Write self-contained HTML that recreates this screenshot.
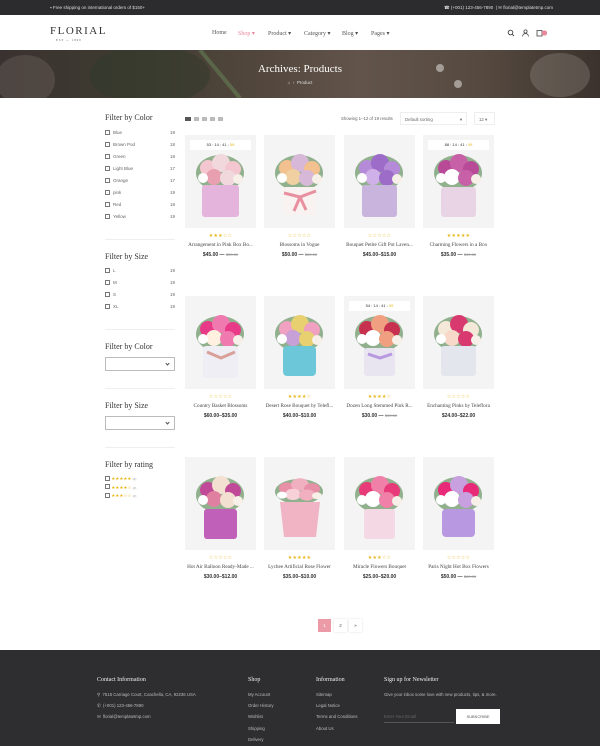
<!DOCTYPE html>
<html><head><meta charset="utf-8"><style>
*{margin:0;padding:0;box-sizing:border-box}
body{width:600px;height:746px;position:relative;background:#fff;font-family:"Liberation Sans",sans-serif;overflow:hidden;color:#333}
.a{position:absolute}
.serif{font-family:"Liberation Serif",serif}
.top{left:0;top:0;width:600px;height:15px;background:#2c2c2e;color:#ddd;font-size:4.5px}
.hdr{left:0;top:15px;width:600px;height:35px;background:#fff}
.nav span{position:absolute;top:30px;font-size:6px;color:#555;font-family:"Liberation Serif",serif}
.ban{left:0;top:50px;width:600px;height:48px;background:linear-gradient(90deg,#3a3230 0%,#3e3a30 20%,#54483e 45%,#62544a 60%,#564a40 80%,#3b322d 100%)}
.ft{font-family:"Liberation Serif",serif;font-size:8px;color:#333}
.li{font-size:4.5px;color:#666}
.cb{position:absolute;width:5px;height:5px;border:0.7px solid #777;background:#fff}
.hr{height:1px;background:#eee;width:70px;left:105px}
.sel{left:105px;width:70px;height:14px;border:1px solid #bbb}
.sel:after{content:"";position:absolute;right:5px;top:4px;width:2px;height:2px;border-right:1px solid #555;border-bottom:1px solid #555;transform:rotate(45deg)}
.card{position:absolute;width:71px}
.img{width:71px;height:93px;background:#f4f4f4;position:relative}
.st{text-align:center;font-size:5px;color:#e8b81e;margin-top:5px;letter-spacing:0.2px}
.nm{text-align:center;font-family:"Liberation Serif",serif;font-size:5.2px;color:#444;margin-top:3px;white-space:nowrap}
.pr{text-align:center;font-size:5px;color:#333;margin-top:4px;font-weight:bold}
.pr s{color:#999;font-weight:normal;font-size:4px}
.cd{position:absolute;left:5px;top:5px;width:61px;height:10px;background:#fff;font-size:4px;text-align:center;line-height:10px;color:#333}
.foot{left:0;top:650px;width:600px;height:96px;background:#2e2e30;color:#bbb}
.fh{font-family:"Liberation Serif",serif;font-size:6px;color:#eee;position:absolute}
.fl{font-size:4.3px;color:#bbb;position:absolute}
</style></head><body>
<div class="a top"><span class="a" style="left:50px;top:5px">▪ Free shipping on international orders of $150+</span><span class="a" style="left:444px;top:5px">☎ (+001) 123-456-7890 &nbsp;| ✉ florial@templatetmp.com</span></div>
<div class="a hdr"></div>
<div class="a serif" style="left:50px;top:25px;font-size:11px;letter-spacing:1.5px;color:#333">FLORIAL</div>
<div class="a serif" style="left:56px;top:38px;font-size:3px;letter-spacing:1px;color:#555">EST — 1890</div>
<div class="nav"><span style="left:212px">Home</span><span style="left:238px;color:#e8889a">Shop ▾</span><span style="left:268px">Product ▾</span><span style="left:304px">Category ▾</span><span style="left:342px">Blog ▾</span><span style="left:371px">Pages ▾</span></div>
<svg class="a" style="left:507px;top:29px" width="40" height="8"><circle cx="3.5" cy="3.5" r="2.3" fill="none" stroke="#444" stroke-width=".9"/><line x1="5.2" y1="5.2" x2="7" y2="7" stroke="#444" stroke-width=".9"/><circle cx="18.5" cy="2.5" r="1.6" fill="none" stroke="#444" stroke-width=".8"/><path d="M15.5 7.5a3 3 0 0 1 6 0" fill="none" stroke="#444" stroke-width=".8"/><rect x="30" y="1.5" width="5" height="5.5" fill="none" stroke="#444" stroke-width=".8"/><circle cx="37.5" cy="4" r="2.6" fill="#e8889a"/></svg>
<div class="a ban"></div>
<svg class="a" style="left:0;top:50px" width="600" height="48"><ellipse cx="150" cy="25" rx="60" ry="30" fill="#2f3a2a" opacity=".5"/><ellipse cx="25" cy="30" rx="30" ry="25" fill="#6e6560" opacity=".4"/><ellipse cx="560" cy="25" rx="30" ry="22" fill="#cfc8c0" opacity=".2"/><circle cx="440" cy="18" r="4" fill="#fff" opacity=".45"/><circle cx="458" cy="34" r="4" fill="#fff" opacity=".45"/><path d="M200 0 L240 48" stroke="#6a8a5a" stroke-width="4" opacity=".5"/></svg>
<div class="a serif" style="left:0;width:600px;top:63px;text-align:center;font-size:11px;color:#fff">Archives: Products</div>
<div class="a" style="left:0;width:600px;top:80px;text-align:center;font-size:4.5px;color:#ddd">⌂ &nbsp;› &nbsp;Product</div>

<div class="a ft" style="left:105px;top:113px">Filter by Color</div>
<div class="a li" style="left:105px;top:127px;width:70px;line-height:12px">
<div style="position:relative;padding-left:8px">Blue<span style="float:right">19</span><i class="cb" style="left:0;top:3px"></i></div>
<div style="position:relative;padding-left:8px">Brown Pod<span style="float:right">18</span><i class="cb" style="left:0;top:3px"></i></div>
<div style="position:relative;padding-left:8px">Green<span style="float:right">18</span><i class="cb" style="left:0;top:3px"></i></div>
<div style="position:relative;padding-left:8px">Light Blue<span style="float:right">17</span><i class="cb" style="left:0;top:3px"></i></div>
<div style="position:relative;padding-left:8px">Orange<span style="float:right">17</span><i class="cb" style="left:0;top:3px"></i></div>
<div style="position:relative;padding-left:8px">pink<span style="float:right">19</span><i class="cb" style="left:0;top:3px"></i></div>
<div style="position:relative;padding-left:8px">Red<span style="float:right">18</span><i class="cb" style="left:0;top:3px"></i></div>
<div style="position:relative;padding-left:8px">Yellow<span style="float:right">19</span><i class="cb" style="left:0;top:3px"></i></div>
</div>
<div class="a hr" style="top:239px"></div>
<div class="a ft" style="left:105px;top:252px">Filter by Size</div>
<div class="a li" style="left:105px;top:265px;width:70px;line-height:12px">
<div style="position:relative;padding-left:8px">L<span style="float:right">19</span><i class="cb" style="left:0;top:3px"></i></div>
<div style="position:relative;padding-left:8px">M<span style="float:right">19</span><i class="cb" style="left:0;top:3px"></i></div>
<div style="position:relative;padding-left:8px">S<span style="float:right">19</span><i class="cb" style="left:0;top:3px"></i></div>
<div style="position:relative;padding-left:8px">XL<span style="float:right">19</span><i class="cb" style="left:0;top:3px"></i></div>
</div>
<div class="a hr" style="top:329px"></div>
<div class="a ft" style="left:105px;top:342px">Filter by Color</div>
<div class="a sel" style="top:357px"></div>
<div class="a hr" style="top:388px"></div>
<div class="a ft" style="left:105px;top:401px">Filter by Size</div>
<div class="a sel" style="top:416px"></div>
<div class="a hr" style="top:447px"></div>
<div class="a ft" style="left:105px;top:460px">Filter by rating</div>
<div class="a" style="left:105px;top:475px;font-size:4.5px;line-height:8.5px;color:#e8b81e">
<div><i class="cb" style="position:relative;display:inline-block;top:0.5px"></i> ★★★★★ <span style="color:#999;font-size:3px">(4)</span></div>
<div><i class="cb" style="position:relative;display:inline-block;top:0.5px"></i> ★★★★☆ <span style="color:#999;font-size:3px">(2)</span></div>
<div><i class="cb" style="position:relative;display:inline-block;top:0.5px"></i> ★★★☆☆ <span style="color:#999;font-size:3px">(2)</span></div>
</div>

<div class="a" style="left:185px;top:117px;width:6px;height:4px;background:#555"></div>
<div class="a" style="left:194px;top:117px;width:30px;height:4px;background:repeating-linear-gradient(90deg,#bbb 0 5px,transparent 5px 8px)"></div>
<div class="a" style="left:341px;top:116px;font-size:4.3px;color:#666">Showing 1–12 of 19 results</div>
<div class="a" style="left:400px;top:112px;width:67px;height:13px;border:1px solid #eee;font-size:4.3px;color:#666;padding:3.5px 4px">Default sorting<span style="float:right">▾</span></div>
<div class="a" style="left:474px;top:112px;width:21px;height:13px;border:1px solid #eee;font-size:4.3px;color:#666;padding:3.5px 4px">12 ▾</div>

<svg width="0" height="0" style="position:absolute"><defs>
<g id="bq"><ellipse cx="35" cy="38" rx="24" ry="18" fill="#3f7a3a" opacity=".55"/><circle cx="23" cy="33" r="8" fill="var(--a)"/><circle cx="36" cy="28" r="9" fill="var(--b)"/><circle cx="48" cy="34" r="8" fill="var(--a)"/><circle cx="29" cy="42" r="8" fill="var(--c)"/><circle cx="43" cy="43" r="8" fill="var(--b)"/><circle cx="18" cy="43" r="5" fill="#fff"/><circle cx="53" cy="44" r="5" fill="#f6f0e8"/></g>
</defs></svg>

<div class="card" style="left:185px;top:135px"><div class="img"><svg width="71" height="93" style="--a:#f4c6cf;--b:#f0d8dc;--c:#e8a0b0"><use href="#bq"/><rect x="17" y="50" width="37" height="32" rx="3" fill="#e4b4dc"/></svg><div class="cd">53 : 14 : 41 : <span style="color:#e8b81e">59</span></div></div><div class="st">★★★☆☆</div><div class="nm">Arrangement in Pink Box Bo...</div><div class="pr">$45.00 — <s>$50.00</s></div></div>
<div class="card" style="left:264px;top:135px"><div class="img"><svg width="71" height="93" style="--a:#f3c08f;--b:#d8b8d8;--c:#f0d0a0"><use href="#bq"/><rect x="19" y="52" width="33" height="28" rx="3" fill="#f8f2f0"/><path d="M20 58 L36 62 L52 56 M36 62 L30 76 M36 62 L42 75" stroke="#e890a0" stroke-width="3" fill="none"/></svg></div><div class="st">☆☆☆☆☆</div><div class="nm">Blossoms in Vogue</div><div class="pr">$50.00 — <s>$60.00</s></div></div>
<div class="card" style="left:344px;top:135px"><div class="img"><svg width="71" height="93" style="--a:#b58ad8;--b:#9c6cc8;--c:#d0b0e8"><use href="#bq"/><rect x="18" y="50" width="35" height="32" rx="3" fill="#c8b4dc"/></svg></div><div class="st">☆☆☆☆☆</div><div class="nm">Bouquet Petite Gift Pot Laven...</div><div class="pr">$45.00–$15.00</div></div>
<div class="card" style="left:423px;top:135px"><div class="img"><svg width="71" height="93" style="--a:#b84a98;--b:#c860a8;--c:#fff"><use href="#bq"/><rect x="18" y="52" width="35" height="30" rx="3" fill="#e8d4e4"/></svg><div class="cd">88 : 14 : 41 : <span style="color:#e8b81e">59</span></div></div><div class="st">★★★★★</div><div class="nm">Charming Flowers in a Box</div><div class="pr">$35.00 — <s>$40.00</s></div></div>

<div class="card" style="left:185px;top:296px"><div class="img"><svg width="71" height="93" style="--a:#e83a88;--b:#f07ab0;--c:#fff0e0"><use href="#bq"/><rect x="18" y="50" width="35" height="32" rx="3" fill="#eeeef4"/><path d="M22 56 L36 62 L50 56" stroke="#d8a098" stroke-width="3" fill="none"/></svg></div><div class="st">☆☆☆☆☆</div><div class="nm">Country Basket Blossoms</div><div class="pr">$60.00–$35.00</div></div>
<div class="card" style="left:264px;top:296px"><div class="img"><svg width="71" height="93" style="--a:#f0a0c0;--b:#e8d070;--c:#c8a0d8"><use href="#bq"/><rect x="19" y="50" width="33" height="30" rx="4" fill="#6cc8d8"/></svg></div><div class="st">★★★★☆</div><div class="nm">Desert Rose Bouquet by Telefl...</div><div class="pr">$40.00–$10.00</div></div>
<div class="card" style="left:344px;top:296px"><div class="img"><svg width="71" height="93" style="--a:#c83050;--b:#f0a080;--c:#fff"><use href="#bq"/><rect x="20" y="52" width="31" height="28" rx="3" fill="#e8e4f0"/><path d="M24 58 L36 62 L48 58" stroke="#b898e0" stroke-width="3" fill="none"/></svg><div class="cd">54 : 14 : 41 : <span style="color:#e8b81e">59</span></div></div><div class="st">★★★★☆</div><div class="nm">Dozen Long Stemmed Pink R...</div><div class="pr">$30.00 — <s>$40.00</s></div></div>
<div class="card" style="left:423px;top:296px"><div class="img"><svg width="71" height="93" style="--a:#f4e8d8;--b:#d83a70;--c:#f8d8c8"><use href="#bq"/><rect x="18" y="50" width="35" height="30" rx="3" fill="#e4e6ee"/></svg></div><div class="st">☆☆☆☆☆</div><div class="nm">Enchanting Pinks by Teleflora</div><div class="pr">$24.00–$22.00</div></div>

<div class="card" style="left:185px;top:457px"><div class="img"><svg width="71" height="93" style="--a:#c04a98;--b:#f4e0d0;--c:#e080a0"><use href="#bq"/><rect x="19" y="52" width="33" height="30" rx="3" fill="#c060b8"/></svg></div><div class="st">☆☆☆☆☆</div><div class="nm">Hot Air Balloon Ready-Made ...</div><div class="pr">$30.00–$12.00</div></div>
<div class="card" style="left:264px;top:457px"><div class="img"><svg width="71" height="93" style="--a:#e890a8;--b:#f0b0c0;--c:#f8d0d8"><path d="M26 40 Q36 8 46 40" stroke="#e8a0b8" stroke-width="3" fill="none"/><use href="#bq" transform="translate(0,8) scale(1,.7)"/><path d="M16 45 L56 45 L52 80 L20 80Z" fill="#f0b4c4"/></svg></div><div class="st">★★★★★</div><div class="nm">Lychee Artificial Rose Flower</div><div class="pr">$35.00–$10.00</div></div>
<div class="card" style="left:344px;top:457px"><div class="img"><svg width="71" height="93" style="--a:#e83a78;--b:#f080a8;--c:#fff"><use href="#bq"/><rect x="20" y="52" width="31" height="30" rx="3" fill="#f4d8e4"/></svg></div><div class="st">★★★☆☆</div><div class="nm">Miracle Flowers Bouquet</div><div class="pr">$25.00–$20.00</div></div>
<div class="card" style="left:423px;top:457px"><div class="img"><svg width="71" height="93" style="--a:#e82a78;--b:#c8a0e0;--c:#fff"><use href="#bq"/><rect x="19" y="52" width="33" height="28" rx="4" fill="#b898e0"/></svg></div><div class="st">☆☆☆☆☆</div><div class="nm">Paris Night Hot Box Flowers</div><div class="pr">$50.00 — <s>$60.00</s></div></div>

<div class="a" style="left:318px;top:619px;width:13px;height:13px;background:#eb9aa6;color:#fff;font-size:4.5px;text-align:center;line-height:13px">1</div>
<div class="a" style="left:334px;top:619px;width:13px;height:13px;background:#fff;box-shadow:0 0 2px #ddd;color:#555;font-size:4.5px;text-align:center;line-height:13px">2</div>
<div class="a" style="left:349px;top:619px;width:13px;height:13px;background:#fff;box-shadow:0 0 2px #ddd;color:#333;font-size:4.5px;text-align:center;line-height:13px">»</div>

<div class="a foot">
<div class="fh" style="left:97px;top:27px">Contact Information</div>
<div class="fl" style="left:97px;top:42px">⚲ &nbsp;7515 Carriage Court, Coachella, CA, 92236 USA</div>
<div class="fl" style="left:97px;top:53px">✆ &nbsp;(+001) 123-456-7890</div>
<div class="fl" style="left:97px;top:64px">✉ &nbsp;florial@templatetmp.com</div>
<div class="fh" style="left:248px;top:27px">Shop</div>
<div class="fl" style="left:248px;top:42px">My Account</div>
<div class="fl" style="left:248px;top:53px">Order History</div>
<div class="fl" style="left:248px;top:64px">Wishlist</div>
<div class="fl" style="left:248px;top:76px">Shipping</div>
<div class="fl" style="left:248px;top:87px">Delivery</div>
<div class="fh" style="left:316px;top:27px">Information</div>
<div class="fl" style="left:316px;top:42px">Sitemap</div>
<div class="fl" style="left:316px;top:53px">Legal Notice</div>
<div class="fl" style="left:316px;top:64px">Terms and Conditions</div>
<div class="fl" style="left:316px;top:76px">About Us</div>
<div class="fh" style="left:384px;top:27px">Sign up for Newsletter</div>
<div class="fl" style="left:384px;top:42px;width:115px;line-height:6.5px">Give your inbox some love with new products, tips, &amp; more.</div>
<div class="fl" style="left:384px;top:64px;width:70px;border-bottom:1px solid #555;padding-bottom:3px;color:#666">Enter Your Email</div>
<div class="a" style="left:456px;top:59px;width:44px;height:15px;background:#fff;color:#555;font-size:4px;text-align:center;line-height:15px">SUBSCRIBE</div>
</div>
</body></html>
